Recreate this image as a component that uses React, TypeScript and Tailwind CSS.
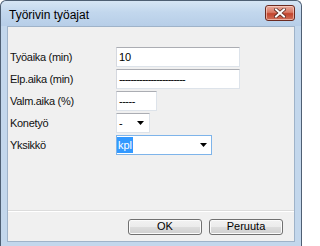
import React from "react";

const font = { fontFamily: '"Liberation Sans", Arial, sans-serif' };

function Arrow() {
  return (
    <svg width="7" height="4" viewBox="0 0 7 4" className="shrink-0">
      <path d="M0 0 H7 L3.5 4 Z" fill="#000" />
    </svg>
  );
}

function TextBox({ w, children }: { w: string; children?: React.ReactNode }) {
  return (
    <div
      className={`${w} h-[20px] bg-white border border-[#dde3ea] border-t-[#abadb3] border-l-[#d5d8df] flex items-center pl-[2px] text-[11px] tracking-[-0.2px] text-black`}
    >
      {children}
    </div>
  );
}

function Row({ label, children }: { label: string; children: React.ReactNode }) {
  return (
    <div className="flex items-center h-[20px]">
      <div className="w-[106px] text-[11px] tracking-[-0.3px] text-[#111]">{label}</div>
      {children}
    </div>
  );
}

function Button({ children }: { children: React.ReactNode }) {
  return (
    <div className="w-[74px] h-[16px] rounded-[3px] border border-[#707070] bg-[linear-gradient(to_bottom,#f2f2f2_0%,#ebebeb_50%,#dddddd_50%,#cfcfcf_100%)] shadow-[inset_0_0_0_1px_#fbfbfb] flex items-center justify-center text-[11px] text-black">
      {children}
    </div>
  );
}

export default function App() {
  return (
    <div style={font} className="w-[302px] h-[246px] overflow-hidden">
      <div className="w-[302px] h-[246px] flex flex-col bg-[#c3d7ec] border-l border-r border-t border-[#4e5f73] rounded-t-[6px]">
        <div className="h-[25px] flex items-start justify-between pl-[8px] pr-[6px] rounded-t-[6px] bg-[linear-gradient(to_bottom,#d6e5f4_0%,#c2d7ed_45%,#b7cee8_100%)]">
          <span className="text-[12px] text-black leading-none mt-[8px]">Työrivin työajat</span>
          <div className="mt-[4px] w-[30px] h-[16px] rounded-[3px] border border-[#6b2a20] bg-[linear-gradient(to_bottom,#e8aa9c_0%,#d97a66_45%,#c2442d_55%,#d0705a_100%)] shadow-[inset_0_0_0_1px_rgba(255,220,210,0.6)] flex items-center justify-center">
            <svg width="12" height="10" viewBox="0 0 12 10">
              <path d="M2 1.5 L10 8.5 M10 1.5 L2 8.5" stroke="#5a2a22" strokeWidth="3.6" strokeLinecap="square" />
              <path d="M2 1.5 L10 8.5 M10 1.5 L2 8.5" stroke="#ffffff" strokeWidth="2" strokeLinecap="square" />
            </svg>
          </div>
        </div>
        <div className="mx-[6px] h-[216px] border border-[#9fb3c9] bg-[#f0f0f0] flex flex-col">
          <div className="flex-1 pt-[20px] pl-[2px] flex flex-col gap-[2px]">
            <Row label="Työaika (min)">
              <TextBox w="w-[124px]">10</TextBox>
            </Row>
            <Row label="Elp.aika (min)">
              <TextBox w="w-[124px]">
                <span className="tracking-[-0.8px]">-----------------------</span>
              </TextBox>
            </Row>
            <Row label="Valm.aika (%)">
              <TextBox w="w-[41px]">
                <span className="tracking-[-0.5px]">-----</span>
              </TextBox>
            </Row>
            <Row label="Konetyö">
              <div className="w-[34px] h-[20px] bg-white border border-[#dde3ea] border-t-[#abadb3] flex items-center justify-between pl-[2px] pr-[5px] text-[11px] text-black">
                <span>-</span>
                <Arrow />
              </div>
            </Row>
            <Row label="Yksikkö">
              <div className="w-[96px] h-[20px] bg-white border border-[#7eb4ea] flex items-center justify-between pl-[0px] pr-[4px] text-[11px]">
                <span className="h-[16px] bg-[#3399ff] text-white px-[1px] flex items-center leading-none">kpl</span>
                <Arrow />
              </div>
            </Row>
          </div>
          <div className="h-[1px] bg-[#dcdcdc]" />
          <div className="h-[30px] border-t border-white flex items-center justify-end gap-[7px] pr-[11px]">
            <Button>OK</Button>
            <Button>Peruuta</Button>
          </div>
        </div>
      </div>
    </div>
  );
}
